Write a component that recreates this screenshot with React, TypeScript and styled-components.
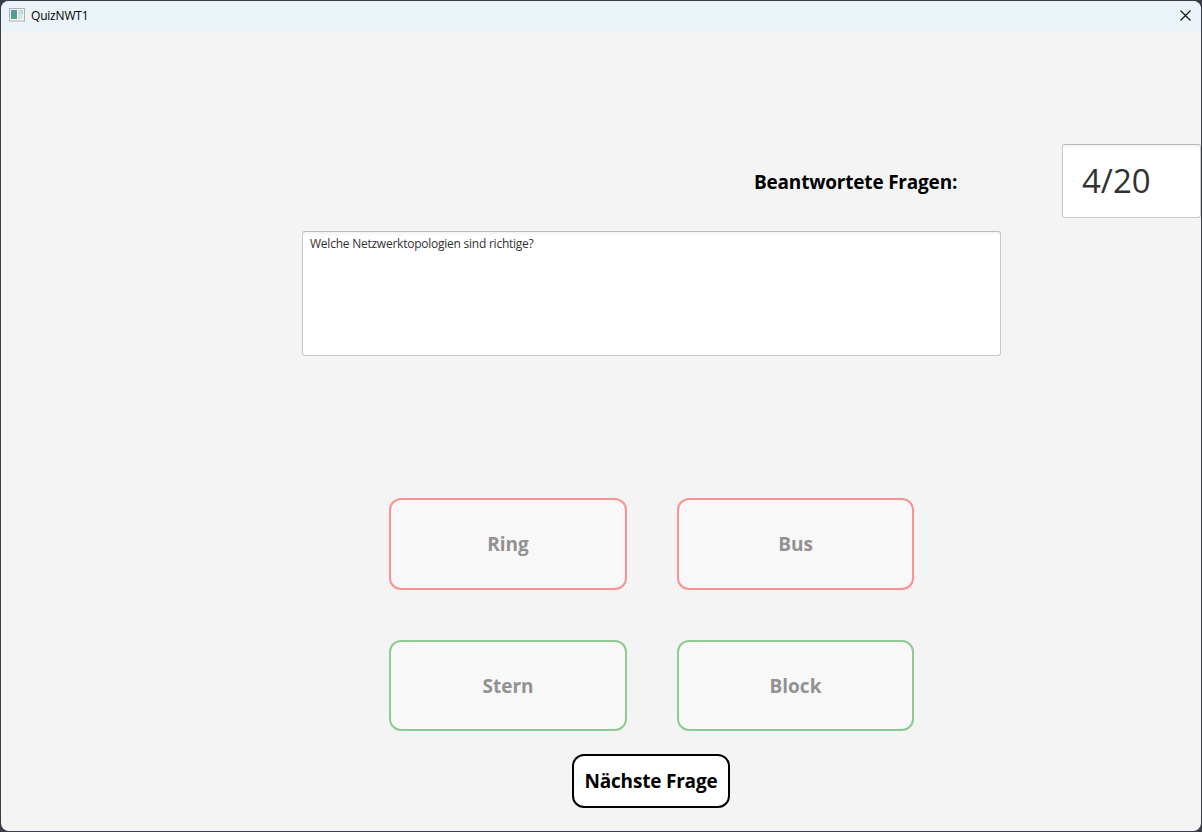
import React from "react";
import styled, { createGlobalStyle } from "styled-components";

const GlobalStyle = createGlobalStyle`
  *, *::before, *::after { box-sizing: border-box; }
  html, body { margin: 0; width: 100%; height: 100%; overflow: hidden; background: #32333f; }
  button, input, textarea { margin: 0; font: inherit; }
`;

const font = `"Segoe UI", "Open Sans", "Noto Sans", sans-serif`;

const Desktop = styled.div`
  width: 1202px;
  height: 832px;
  padding: 1px;
  background: #3b3c49;
  font-family: ${font};
`;

const Window = styled.main`
  display: flex;
  flex-direction: column;
  width: 1200px;
  height: 830px;
  overflow: hidden;
  border-radius: 8px;
  background: #f4f4f4;
`;

const TitleBar = styled.header`
  display: flex;
  align-items: flex-start;
  flex: 0 0 30px;
  padding: 7px 10px 0 8px;
  background: #ebf4f8;
`;

const Title = styled.span`
  flex: 1;
  margin-left: 6px;
  font-size: 12px;
  letter-spacing: -0.2px;
  line-height: 16px;
  color: #000;
`;

const CloseButton = styled.button`
  display: flex;
  margin-top: 2px;
  padding: 0;
  border: 0;
  background: none;
`;

const Content = styled.div`
  display: flex;
  flex-direction: column;
  flex: 1;
  padding-top: 113px;
`;

const Progress = styled.section`
  display: flex;
  align-items: center;
  justify-content: flex-end;
  height: 74px;
`;

const ProgressLabel = styled.span`
  width: 308px;
  padding-top: 2px;
  font-size: 19px;
  font-weight: 700;
  letter-spacing: -0.2px;
  line-height: 26px;
  white-space: nowrap;
  color: #000;
`;

const Field = styled.div`
  border: 1px solid #c8c8c8;
  border-top-color: #b9b9b9;
  border-radius: 3px;
  background: linear-gradient(#f3f3f3, #fff 4px);
  color: #323232;
`;

const Counter = styled(Field)`
  width: 139px;
  height: 74px;
  padding-left: 19px;
  font-size: 33px;
  line-height: 72px;
  letter-spacing: 0;
`;

const Question = styled(Field)`
  width: 699px;
  height: 125px;
  margin: 13px 0 0 301px;
  padding: 3px 7px;
  font-size: 12px;
  line-height: 18px;
  letter-spacing: -0.24px;
`;

const Answers = styled.section`
  display: grid;
  grid-template: 92px 91px / 238px 237px;
  gap: 50px;
  margin: 142px 0 0 388px;
`;

const RoundButton = styled.button`
  padding: 0;
  border: 2px solid #000;
  border-radius: 12px;
  background: #fff;
  color: #000;
  font-size: 19px;
  font-weight: 700;
  letter-spacing: -0.2px;
  line-height: 26px;
  white-space: nowrap;
`;

const AnswerButton = styled(RoundButton)<{ $correct: boolean }>`
  border-color: ${({ $correct }) => ($correct ? "#92c892" : "#fa9292")};
  background: #f8f8f8;
  color: #929292;
  letter-spacing: 0;
`;

const NextButton = styled(RoundButton)`
  width: 158px;
  height: 54px;
  margin: 23px 0 0 571px;
`;

const answers = [
  { text: "Ring", correct: false },
  { text: "Bus", correct: false },
  { text: "Stern", correct: true },
  { text: "Block", correct: true },
];

function AppIcon() {
  return (
    <svg width="16" height="14" viewBox="0 0 16 14" aria-hidden="true">
      <defs>
        <linearGradient id="screen" x1="0" y1="0" x2="0.6" y2="1">
          <stop offset="0" stopColor="#5b8fb0" />
          <stop offset="1" stopColor="#4fa882" />
        </linearGradient>
      </defs>
      <rect x="0.5" y="0.5" width="15" height="12.5" fill="#f6f6f6" stroke="#aeb1b3" />
      <rect x="2" y="2" width="6" height="9" fill="url(#screen)" />
      <rect x="9" y="2" width="3" height="9" fill="#d5dfe2" />
      <rect x="12" y="2" width="2" height="4" fill="#b9d5dc" />
      <rect x="12" y="6" width="2" height="5" fill="#e3e8e5" />
    </svg>
  );
}

export default function App() {
  return (
    <Desktop>
      <GlobalStyle />
      <Window>
        <TitleBar>
          <AppIcon />
          <Title>QuizNWT1</Title>
          <CloseButton aria-label="Schließen">
            <svg width="11" height="11" viewBox="0 0 11 11">
              <path d="M.5 .5 10.5 10.5M10.5 .5 .5 10.5" stroke="#111" strokeWidth="1.1" />
            </svg>
          </CloseButton>
        </TitleBar>
        <Content>
          <Progress>
            <ProgressLabel>Beantwortete Fragen:</ProgressLabel>
            <Counter>4/20</Counter>
          </Progress>
          <Question>Welche Netzwerktopologien sind richtige?</Question>
          <Answers>
            {answers.map(({ text, correct }) => (
              <AnswerButton key={text} $correct={correct} disabled>
                {text}
              </AnswerButton>
            ))}
          </Answers>
          <NextButton>Nächste Frage</NextButton>
        </Content>
      </Window>
    </Desktop>
  );
}
